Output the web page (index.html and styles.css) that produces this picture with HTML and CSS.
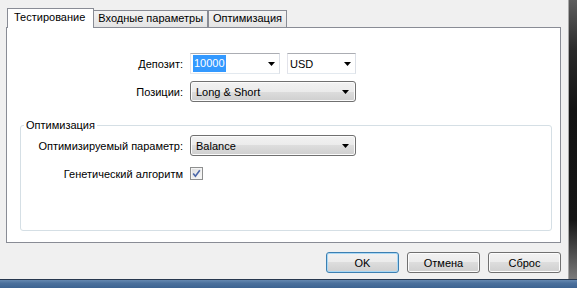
FILE: index.html
```html
<!DOCTYPE html>
<html lang="ru">
<head>
<meta charset="utf-8">
<title>Тестирование</title>
<link rel="stylesheet" href="styles.css">
</head>
<body>
<div class="screen">
  <div class="main">
    <div class="dialog">
      <div class="tabs">
        <div class="tab active">Тестирование</div>
        <div class="tab second">Входные параметры</div>
        <div class="tab">Оптимизация</div>
      </div>
      <div class="panel">
        <div class="row">
          <span class="label">Депозит:</span>
          <div class="combo edit w-dep"><span class="sel">10000</span><svg class="arrow" width="7" height="4" viewBox="0 0 7 4"><path d="M0 0H7L3.5 4Z"/></svg></div>
          <div class="combo edit w-cur"><span>USD</span><svg class="arrow" width="7" height="4" viewBox="0 0 7 4"><path d="M0 0H7L3.5 4Z"/></svg></div>
        </div>
        <div class="row">
          <span class="label">Позиции:</span>
          <div class="combo list w-wide"><span>Long &amp; Short</span><svg class="arrow" width="7" height="4" viewBox="0 0 7 4"><path d="M0 0H7L3.5 4Z"/></svg></div>
        </div>
        <fieldset class="group">
          <legend>Оптимизация</legend>
          <div class="row">
            <span class="label glabel">Оптимизируемый параметр:</span>
            <div class="combo list w-wide"><span>Balance</span><svg class="arrow" width="7" height="4" viewBox="0 0 7 4"><path d="M0 0H7L3.5 4Z"/></svg></div>
          </div>
          <div class="row">
            <span class="label glabel">Генетический алгоритм</span>
            <span class="check"><svg width="9" height="9" viewBox="0 0 9 9"><path d="M1.2 4.6L3.4 7.2L7.8 1.2" fill="none" stroke="#4a66a8" stroke-width="1.6"/></svg></span>
          </div>
        </fieldset>
      </div>
      <div class="buttons">
        <button class="btn default">OK</button>
        <button class="btn">Отмена</button>
        <button class="btn">Сброс</button>
      </div>
    </div>
    <div class="rframe"></div>
  </div>
  <div class="bframe"></div>
</div>
</body>
</html>
```
FILE: styles.css
```css
* { box-sizing: border-box; }
html, body { margin: 0; padding: 0; }
body {
  width: 577px;
  height: 288px;
  overflow: hidden;
  background: #f0f0f0;
  font-family: "Liberation Sans", Arial, sans-serif;
  font-size: 11px;
  color: #000;
}
.screen { display: flex; flex-direction: column; height: 288px; }
.main { display: flex; height: 279px; }
.dialog { width: 568px; flex: none; }
.rframe {
  flex: 1;
  border-left: 1px solid #a8a8a8;
  background: linear-gradient(180deg, #5e5e5e 0, #2a2a2a 50px, #121212 110px, #151515 220px, #7a7a7a 279px);
}
.bframe {
  height: 9px;
  border-top: 1px solid #27384f;
  background: linear-gradient(#6688b0 0, #4b709c 40%, #3d6391 100%);
}

/* tabs */
.tabs {
  display: flex;
  align-items: flex-end;
  height: 27px;
  padding: 8px 0 0 7px;
}
.tab {
  height: 17px;
  border: 1px solid #898c95;
  border-bottom: none;
  padding: 0 4px;
  line-height: 15px;
  white-space: nowrap;
  background: linear-gradient(#f3f3f3, #e4e4e4);
}
.tab.active {
  height: 20px;
  margin-bottom: -1px;
  position: relative;
  z-index: 1;
  background: #fff;
  line-height: 17px;
  padding: 0 8px 0 6px;
}
.tab.second { margin-left: -1px; }

/* panel */
.panel {
  margin-left: 6px;
  width: 555px;
  height: 216px;
  border: 1px solid #898c95;
  background: #fff;
  padding-top: 25px;
}
.row {
  display: flex;
  align-items: center;
  gap: 7px;
  height: 21px;
}
.row + .row { margin-top: 7px; }
.label { width: 176px; flex: none; text-align: right; white-space: nowrap; }
.glabel { width: 162px; }

.combo {
  height: 21px;
  display: flex;
  align-items: center;
  justify-content: space-between;
  flex: none;
}
.combo.edit {
  border: 1px solid;
  border-color: #abadb3 #dbdfe6 #e3e9ef #e2e3ea;
  background: #fff;
  padding: 0 4px 0 2px;
}
.combo.list {
  border: 1px solid #707070;
  border-radius: 3px;
  background: linear-gradient(#f2f2f2 0, #ebebeb 50%, #dddddd 50%, #cfcfcf 100%);
  box-shadow: inset 0 0 0 1px #fbfbfb;
  padding: 0 6px 0 5px;
}
.w-dep { width: 90px; }
.w-cur { width: 69px; }
.w-wide { width: 166px; }
.sel {
  background: #3399ff;
  color: #fff;
  padding: 1px 1px;
  line-height: 15px;
}
.arrow { flex: none; }
.arrow path { fill: #000; }

.group {
  margin: 16px 8px 0 13px;
  padding: 3px 0 46px 0;
  border: 1px solid #d5dfe5;
  border-radius: 3px;
  min-width: 0;
}
.group legend {
  padding: 0 2px;
  margin-left: 3px;
  line-height: 14px;
}
.check {
  width: 13px;
  height: 13px;
  border: 1px solid #8e8f8f;
  background: linear-gradient(135deg, #dcdcdc, #fbfbfb);
  box-shadow: inset 0 0 0 1px #f4f4f4;
  display: flex;
  align-items: center;
  justify-content: center;
  flex: none;
}

/* buttons */
.buttons {
  display: flex;
  justify-content: flex-end;
  gap: 8px;
  padding: 9px 7px 0 0;
}
.btn {
  width: 73px;
  height: 21px;
  border: 1px solid #707070;
  border-radius: 3px;
  background: linear-gradient(#f2f2f2 0, #ebebeb 50%, #dddddd 50%, #cfcfcf 100%);
  box-shadow: inset 0 0 0 1px #fcfcfc;
  font-family: "Liberation Sans", Arial, sans-serif;
  font-weight: normal;
  font-size: 11px;
  color: #000;
  padding: 0;
}
.btn.default {
  border-color: #3c7fb1;
  box-shadow: inset 0 0 0 1px #a9d8f5;
}
```
